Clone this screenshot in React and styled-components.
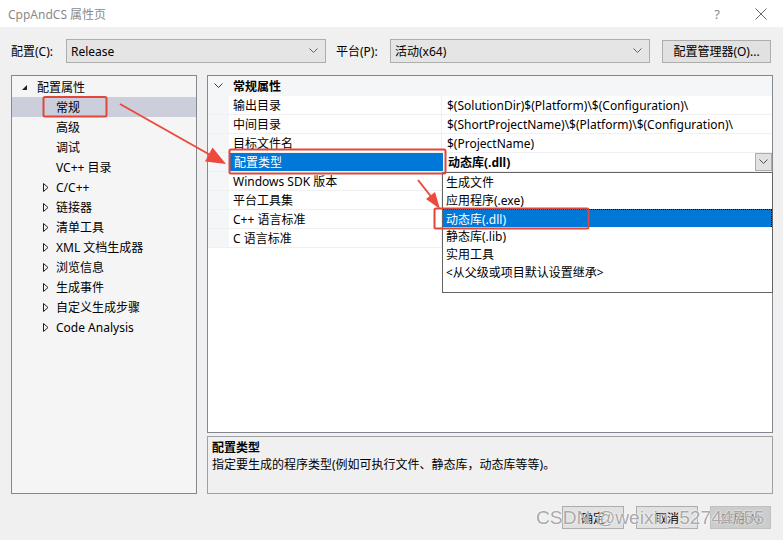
import React from 'react';
import styled, { createGlobalStyle } from 'styled-components';

const GlobalStyle = createGlobalStyle`
  html, body {
    margin: 0;
    padding: 0;
    background: #f0f0f0;
  }
  body {
    font-family: "Noto Sans", "Noto Sans CJK SC", sans-serif;
    font-size: 12px;
    color: #000;
  }
`;

const treeItems = [
  { label: '配置属性', level: 0, expander: 'open' },
  { label: '常规', level: 1, selected: true },
  { label: '高级', level: 1 },
  { label: '调试', level: 1 },
  { label: 'VC++ 目录', level: 1 },
  { label: 'C/C++', level: 1, expander: 'closed' },
  { label: '链接器', level: 1, expander: 'closed' },
  { label: '清单工具', level: 1, expander: 'closed' },
  { label: 'XML 文档生成器', level: 1, expander: 'closed' },
  { label: '浏览信息', level: 1, expander: 'closed' },
  { label: '生成事件', level: 1, expander: 'closed' },
  { label: '自定义生成步骤', level: 1, expander: 'closed' },
  { label: 'Code Analysis', level: 1, expander: 'closed' },
];

const props = [
  { name: '输出目录', value: '$(SolutionDir)$(Platform)\\$(Configuration)\\' },
  { name: '中间目录', value: '$(ShortProjectName)\\$(Platform)\\$(Configuration)\\' },
  { name: '目标文件名', value: '$(ProjectName)' },
  { name: '配置类型', value: '动态库(.dll)', selected: true },
  { name: 'Windows SDK 版本', value: '' },
  { name: '平台工具集', value: '' },
  { name: 'C++ 语言标准', value: '' },
  { name: 'C 语言标准', value: '' },
];

const options = ['生成文件', '应用程序(.exe)', '动态库(.dll)', '静态库(.lib)', '实用工具', '<从父级或项目默认设置继承>'];

function Chevron({ color = '#606060' }) {
  return (
    <svg width="9" height="6" viewBox="0 0 9 6">
      <polyline points="0.5,0.5 4.5,4.5 8.5,0.5" fill="none" stroke={color} strokeWidth="1" />
    </svg>
  );
}

function Expander({ type }) {
  if (type === 'open') {
    return (
      <svg width="7" height="7" viewBox="0 0 7 7">
        <polygon points="6,1 6,6 1,6" fill="#1e1e1e" />
      </svg>
    );
  }
  if (type === 'closed') {
    return (
      <svg width="6" height="9" viewBox="0 0 6 9">
        <polygon points="0.5,0.5 5,4.5 0.5,8.5" fill="none" stroke="#1e1e1e" strokeWidth="1" />
      </svg>
    );
  }
  return null;
}

function Annotations() {
  return (
    <Overlay width="783" height="540" viewBox="0 0 783 540">
      <rect x="43.5" y="97" width="63" height="19.5" rx="1.5" fill="none" stroke="#e2463b" strokeWidth="2" />
      <rect x="229.5" y="149.5" width="216" height="24" rx="1.5" fill="none" stroke="#e2463b" strokeWidth="2" />
      <rect x="434.5" y="208.5" width="154" height="20" rx="1.5" fill="none" stroke="#e2463b" strokeWidth="2" />
      <line x1="120" y1="104" x2="212" y2="156" stroke="#ec4a3c" strokeWidth="2" />
      <polygon points="226,164 205,161.5 212.5,147.5" fill="#ec4a3c" />
      <line x1="418" y1="180" x2="433" y2="199" stroke="#ec4a3c" strokeWidth="2" />
      <polygon points="440,209 426,199 435,192" fill="#ec4a3c" />
    </Overlay>
  );
}

export default function App() {
  return (
    <Window>
      <GlobalStyle />
      <TitleBar>
        <Title>CppAndCS 属性页</Title>
        <TitleButton>?</TitleButton>
        <TitleButton>
          <svg width="12" height="12" viewBox="0 0 12 12">
            <path d="M0.5 0.5 L11.5 11.5 M11.5 0.5 L0.5 11.5" stroke="#6a6a6a" strokeWidth="1" />
          </svg>
        </TitleButton>
      </TitleBar>

      <TopRow>
        <FieldLabel $width={55}>配置(C):</FieldLabel>
        <Combo>
          <span>Release</span>
          <Chevron />
        </Combo>
        <FieldLabel $width={54} $left={10}>平台(P):</FieldLabel>
        <Combo>
          <span>活动(x64)</span>
          <Chevron />
        </Combo>
        <Button $width={109} $left={12}>配置管理器(O)...</Button>
      </TopRow>

      <Main>
        <Tree>
          {treeItems.map((item) => (
            <TreeRow key={item.label} $level={item.level} $selected={item.selected}>
              <ExpanderBox $level={item.level}>
                <Expander type={item.expander} />
              </ExpanderBox>
              <span>{item.label}</span>
            </TreeRow>
          ))}
        </Tree>

        <RightColumn>
          <Grid>
            <HeaderRow>
              <Gutter>
                <Chevron color="#3c3c3c" />
              </Gutter>
              <HeaderText>常规属性</HeaderText>
            </HeaderRow>
            {props.map((p) => (
              <PropRow key={p.name}>
                <Gutter />
                <NameCell $selected={p.selected}>{p.name}</NameCell>
                <ValueCell $bold={p.selected}>
                  <span>{p.value}</span>
                  {p.selected && (
                    <DropButton>
                      <Chevron color="#505050" />
                    </DropButton>
                  )}
                </ValueCell>
              </PropRow>
            ))}
            <DropList>
              {options.map((o) => (
                <Option key={o} $selected={o === '动态库(.dll)'}>
                  {o}
                </Option>
              ))}
            </DropList>
          </Grid>
          <Description>
            <DescTitle>配置类型</DescTitle>
            <div>指定要生成的程序类型(例如可执行文件、静态库，动态库等等)。</div>
          </Description>
        </RightColumn>
      </Main>

      <Footer>
        <Button $width={62}>确定</Button>
        <Button $width={62}>取消</Button>
        <Button $width={61} $disabled>应用(A)</Button>
      </Footer>

      <Annotations />
      <Watermark>CSDN @weixin_52744755</Watermark>
    </Window>
  );
}

const Window = styled.div`
  position: relative;
  width: 783px;
  height: 540px;
  display: flex;
  flex-direction: column;
  background: #f0f0f0;
  overflow: hidden;
`;

const TitleBar = styled.div`
  height: 27px;
  background: #ffffff;
  display: flex;
  align-items: center;
  padding-left: 8px;
  color: #8a8a8a;
`;

const Title = styled.div`
  flex: 1;
  font-size: 12px;
`;

const TitleButton = styled.div`
  width: 44px;
  height: 27px;
  display: flex;
  align-items: center;
  justify-content: center;
  color: #8a8a8a;
  font-size: 13px;
`;

const TopRow = styled.div`
  display: flex;
  align-items: center;
  height: 24px;
  margin-top: 12px;
  padding-left: 11px;
`;

const FieldLabel = styled.div`
  width: ${(p) => p.$width}px;
  margin-left: ${(p) => p.$left || 0}px;
  white-space: nowrap;
`;

const Combo = styled.div`
  box-sizing: border-box;
  width: 260px;
  height: 24px;
  display: flex;
  align-items: center;
  justify-content: space-between;
  padding: 0 7px 0 4px;
  background: #e5e5e5;
  border: 1px solid #adadad;
`;

const Button = styled.div`
  box-sizing: border-box;
  width: ${(p) => p.$width}px;
  height: 23px;
  margin-left: ${(p) => p.$left || 0}px;
  display: flex;
  align-items: center;
  justify-content: center;
  white-space: nowrap;
  background: ${(p) => (p.$disabled ? '#cccccc' : '#e1e1e1')};
  border: 1px solid ${(p) => (p.$disabled ? '#bfbfbf' : '#adadad')};
  color: ${(p) => (p.$disabled ? '#838383' : '#000')};
`;

const Main = styled.div`
  display: flex;
  gap: 10px;
  height: 419px;
  margin-top: 12px;
  padding-left: 11px;
`;

const Tree = styled.div`
  box-sizing: border-box;
  width: 186px;
  height: 100%;
  padding-top: 1px;
  background: #f5f5f5;
  border: 1px solid #828790;
`;

const TreeRow = styled.div`
  height: 20px;
  display: flex;
  align-items: center;
  padding-left: ${(p) => (p.$level ? 28 : 9)}px;
  background: ${(p) => (p.$selected ? '#cccedb' : 'transparent')};
  white-space: nowrap;
`;

const ExpanderBox = styled.div`
  width: 16px;
  display: flex;
  align-items: center;
  padding-left: ${(p) => (p.$level ? 3 : 0)}px;
  box-sizing: border-box;
`;

const RightColumn = styled.div`
  width: 566px;
  display: flex;
  flex-direction: column;
  gap: 3px;
`;

const Grid = styled.div`
  position: relative;
  box-sizing: border-box;
  height: 358px;
  background: #ffffff;
  border: 1px solid #828790;
`;

const HeaderRow = styled.div`
  height: 20px;
  display: flex;
  align-items: center;
  background: #f5f6f8;
`;

const HeaderText = styled.div`
  padding-left: 4px;
  font-weight: bold;
`;

const Gutter = styled.div`
  width: 21px;
  height: 100%;
  flex: none;
  display: flex;
  align-items: center;
  justify-content: center;
  background: #f5f6f8;
`;

const PropRow = styled.div`
  box-sizing: border-box;
  height: 19px;
  display: flex;
  align-items: stretch;
  border-bottom: 1px solid #f0f0f0;
`;

const NameCell = styled.div`
  box-sizing: border-box;
  width: 213px;
  flex: none;
  display: flex;
  align-items: center;
  padding-left: 4px;
  margin: ${(p) => (p.$selected ? '0 1px 0 1px' : '0 1px 0 0')};
  background: ${(p) => (p.$selected ? '#0078d7' : '#ffffff')};
  color: ${(p) => (p.$selected ? '#ffffff' : '#000')};
  border-right: ${(p) => (p.$selected ? 'none' : '1px solid #f0f0f0')};
  white-space: nowrap;
`;

const ValueCell = styled.div`
  flex: 1;
  display: flex;
  align-items: center;
  justify-content: space-between;
  padding-left: 4px;
  font-weight: ${(p) => (p.$bold ? 'bold' : 'normal')};
  white-space: nowrap;
`;

const DropButton = styled.div`
  box-sizing: border-box;
  width: 17px;
  height: 18px;
  display: flex;
  align-items: center;
  justify-content: center;
  background: #e1e1e1;
  border: 1px solid #adadad;
`;

const DropList = styled.div`
  position: absolute;
  left: 234px;
  top: 96px;
  box-sizing: border-box;
  width: 331px;
  height: 121px;
  background: #ffffff;
  border: 1px solid #646464;
`;

const Option = styled.div`
  box-sizing: border-box;
  height: 18px;
  display: flex;
  align-items: center;
  padding-left: 3px;
  white-space: nowrap;
  background: ${(p) => (p.$selected ? '#0078d7' : 'transparent')};
  color: ${(p) => (p.$selected ? '#ffffff' : '#000')};
  border: 1px dotted ${(p) => (p.$selected ? '#000' : 'transparent')};
  border-width: ${(p) => (p.$selected ? '1px 1px 0 0' : '0')};
`;

const Description = styled.div`
  box-sizing: border-box;
  height: 58px;
  padding: 2px 4px;
  line-height: 17px;
  background: #f0f0f0;
  border: 1px solid #a0a0a0;
`;

const DescTitle = styled.div`
  font-weight: bold;
`;

const Footer = styled.div`
  display: flex;
  justify-content: flex-end;
  gap: 12px;
  margin-top: 12px;
  padding-right: 12px;
`;

const Overlay = styled.svg`
  position: absolute;
  left: 0;
  top: 0;
  pointer-events: none;
`;

const Watermark = styled.div`
  position: absolute;
  left: 536px;
  top: 507px;
  font-family: "Liberation Sans", Arial, sans-serif;
  font-size: 19.2px;
  color: rgba(120, 120, 120, 0.65);
  text-shadow: 0 0 1px #fff, 0 0 2px #fff;
  white-space: nowrap;
  pointer-events: none;
`;
